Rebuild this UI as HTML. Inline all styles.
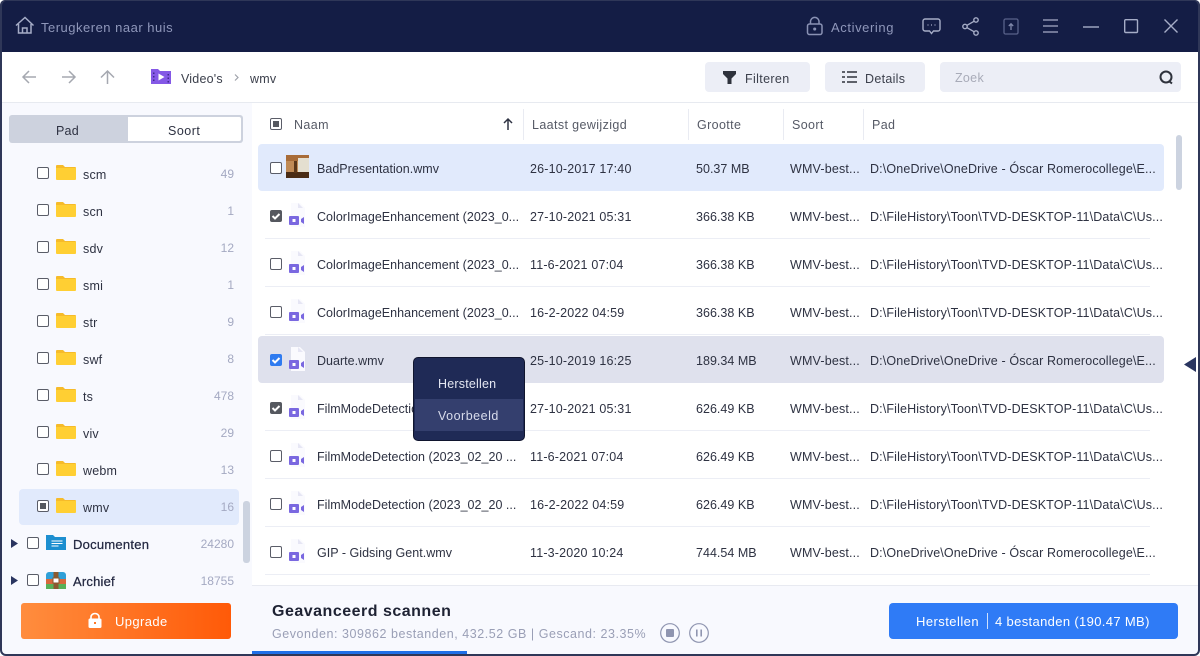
<!DOCTYPE html>
<html lang="nl"><head><meta charset="utf-8"><title>Herstellen</title>
<style>
*{box-sizing:border-box}
html,body{margin:0;padding:0;width:1200px;height:656px;overflow:hidden;background:#fff}
body{font-family:"Liberation Sans","Noto Sans CJK SC",sans-serif;font-size:12.5px;color:#2e3242;position:relative}
.a{position:absolute;white-space:nowrap}
.t{position:absolute;white-space:nowrap;line-height:18px;height:18px;margin-top:1px}
svg{position:absolute;display:block;overflow:visible}
.cb{position:absolute;width:12px;height:12px;border:1.3px solid #5a5d68;border-radius:2px;background:#fff}
.ck{position:absolute;width:12px;height:12px;border-radius:2px;background:#55585f}
.rows .cb,.rows .ck{margin-top:1px}
.hl{position:absolute;left:258px;width:906px;height:47px;border-radius:4px}
.sep{position:absolute;left:265px;width:885px;height:1px;background:#eceef5}
.hd{color:#565a66;font-size:12.5px;letter-spacing:.38px}
.cnt{position:absolute;right:966px;color:#a4a9c2;font-size:12px;line-height:18px;white-space:nowrap}
.sn{position:absolute;left:83px;line-height:18px;font-size:12.5px;color:#2e3242;letter-spacing:.2px;margin-top:1px}
.vs{position:absolute;top:109px;width:1px;height:31px;background:#e9ebf2}
.n{left:317px;letter-spacing:.02px}.d{left:530px;letter-spacing:.18px}.s{left:696px;letter-spacing:.02px}.k{left:790px;letter-spacing:.17px}.p{left:870px;letter-spacing:.14px}
</style></head><body>
<div class="a" style="left:0;top:0;width:1200px;height:52px;background:#141d45;border-radius:5px 5px 0 0"></div>

<svg style="left:15px;top:16px" width="20" height="20" viewBox="0 0 20 20" fill="none" stroke="#a6adc7" stroke-width="1.5"><path d="M1 9.500L10 1.500l8.500 8M3.500 8v9h12.500V8M7.500 17v-5h4.500v5"/></svg>
<div class="t" style="left:41px;top:18px;color:#8f97ba;font-size:13px;letter-spacing:.5px">Terugkeren naar huis</div>
<svg style="left:806px;top:16px" width="18" height="20" viewBox="0 0 18 20" fill="none" stroke="#8a92b4" stroke-width="1.500"><rect x="1.500" y="8" width="14.500" height="10.500" rx="2"/><path d="M4.500 8V5a4.300 4.300 0 0 1 8.500 0v3"/><circle cx="8.700" cy="13" r=".8" fill="#8a92b4"/></svg>
<div class="t" style="left:831px;top:18px;color:#8f97ba;font-size:13px;letter-spacing:.6px">Activering</div>
<svg style="left:922px;top:18px" width="19" height="17" viewBox="0 0 19 17" fill="none" stroke="#a6adc7" stroke-width="1.400"><path d="M3 1h13a2 2 0 0 1 2 2v8a2 2 0 0 1-2 2h-4.500L9.500 15.500 7.500 13H3a2 2 0 0 1-2-2V3a2 2 0 0 1 2-2z"/><path d="M5.500 7h1M9 7h1M12.500 7h1" stroke-width="1.300"/></svg>
<svg style="left:962px;top:17px" width="18" height="19" viewBox="0 0 18 19" fill="none" stroke="#a6adc7" stroke-width="1.400"><circle cx="3" cy="9.500" r="2.200"/><circle cx="14" cy="3" r="2.200"/><circle cx="14" cy="16" r="2.200"/><path d="M5 8.300l7-4M5 10.700l7 4"/></svg>
<svg style="left:1003px;top:18px" width="16" height="17" viewBox="0 0 16 17" fill="none" stroke="#59628a" stroke-width="1.300"><rect x="1" y="1" width="14" height="15" rx="1.500"/><path d="M8 12V6M5.800 8L8 5.800 10.200 8" stroke="#8089ab"/></svg>
<svg style="left:1043px;top:19px" width="16" height="14" viewBox="0 0 16 14" stroke="#a6adc7" stroke-width="1.300"><path d="M0 1h15M0 7h15M0 13h15"/></svg>
<svg style="left:1083px;top:26px" width="16" height="2"><path d="M0 1h16" stroke="#a6adc7" stroke-width="1.400"/></svg>
<svg style="left:1124px;top:19px" width="14" height="14" fill="none"><rect x=".7" y=".7" width="12.800" height="12.800" rx="1" stroke="#a6adc7" stroke-width="1.400"/></svg>
<svg style="left:1164px;top:19px" width="14" height="14" stroke="#a6adc7" stroke-width="1.400"><path d="M.5.500l13 13M13.500.500l-13 13"/></svg>

<svg style="left:22px;top:70px" width="15" height="14" fill="none" stroke="#a5a8b0" stroke-width="1.500"><path d="M14 7H1M7 1L1 7l6 6"/></svg>
<svg style="left:61px;top:70px" width="15" height="14" fill="none" stroke="#a5a8b0" stroke-width="1.500"><path d="M1 7h13M8 1l6 6-6 6"/></svg>
<svg style="left:100px;top:70px" width="15" height="14" fill="none" stroke="#a5a8b0" stroke-width="1.500"><path d="M7.500 14V1M1 7.500L7.500 1 14 7.500"/></svg>
<svg style="left:151px;top:69px" width="20" height="15" viewBox="0 0 20 15"><path d="M0 0h7l2 2h11v13H0z" fill="#8458e6"/><path d="M7.500 4.500l6 3.500-6 3.500z" fill="#fff"/><path d="M2 3.500h1.500v1.500H2zM2 7h1.500v1.500H2zM2 10.500h1.500V12H2zM16.500 5H18v1.500h-1.500zM16.500 8.500H18V10h-1.500zM16.500 12H18v1.500h-1.500z" fill="#3f2a8c"/></svg>
<div class="t" style="left:181px;top:69px;color:#3c404c;letter-spacing:.2px">Video's</div>
<svg style="left:234px;top:74px" width="5" height="7" fill="none" stroke="#9fa2aa" stroke-width="1.200"><path d="M1 .5l3 3-3 3"/></svg>
<div class="t" style="left:250px;top:69px;color:#3c404c;letter-spacing:.2px">wmv</div>

<div class="a" style="left:705px;top:62px;width:105px;height:30px;background:#eceef6;border-radius:4px"></div>
<svg style="left:723px;top:71px" width="13" height="13"><path d="M0 0h13v3L8.500 7.500V13h-4V7.500L0 3z" fill="#2e323c"/></svg>
<div class="t" style="left:745px;top:69px;color:#3c404c;font-size:12.500px;letter-spacing:.36px">Filteren</div>
<div class="a" style="left:825px;top:62px;width:100px;height:30px;background:#eceef6;border-radius:4px"></div>
<svg style="left:842px;top:71px" width="15" height="12" stroke="#2e323c" stroke-width="1.500"><path d="M0 1h3M5 1h10M0 6h3M5 6h10M0 11h3M5 11h10"/></svg>
<div class="t" style="left:865px;top:69px;color:#3c404c;letter-spacing:.3px">Details</div>
<div class="a" style="left:940px;top:62px;width:241px;height:30px;background:#eceef6;border-radius:4px"></div>
<div class="t" style="left:955px;top:68px;color:#a8abb8;letter-spacing:.3px">Zoek</div>
<svg style="left:1159px;top:71px" width="15" height="14" fill="none" stroke="#2e323c" stroke-width="2"><circle cx="7" cy="6" r="5.500"/><path d="M10.500 10.500l2.500 2"/></svg>
<div class="a" style="left:2px;top:102px;width:1196px;height:1px;background:#e7eaf0"></div>

<!-- sidebar -->
<div class="a" style="left:2px;top:103px;width:250px;height:551px;background:#f8f9fe"></div>
<div class="a" style="left:9px;top:115px;width:234px;height:28px;background:#cdd2de;border-radius:3px"></div>
<div class="a" style="left:128px;top:117px;width:113px;height:24px;background:#fff;border-radius:0 2px 2px 0"></div>
<div class="t" style="left:56px;top:121px;color:#2e3242;letter-spacing:.2px">Pad</div>
<div class="t" style="left:168px;top:121px;color:#2e3242;letter-spacing:.5px">Soort</div>
<div class="a" style="left:19px;top:489px;width:220px;height:36px;background:#e1eafc;border-radius:4px"></div>
<div class="a" style="left:243px;top:501px;width:7px;height:62px;background:#ccd3e0;border-radius:3px"></div>

<svg width="0" height="0" style="position:absolute"><defs>
<symbol id="fo" viewBox="0 0 20 15"><path d="M0 1a1 1 0 0 1 1-1h6l2 2h10a1 1 0 0 1 1 1v2H0z" fill="#f6bb2a"/><path d="M0 3h20v11a1 1 0 0 1-1 1H1a1 1 0 0 1-1-1z" fill="#ffcf33"/></symbol>
<symbol id="vf" viewBox="0 0 18 26"><path d="M3 0h9l5 5v19H3z" fill="#fafafe"/><path d="M10 0l5 5h-5z" fill="#e6e6f4"/><rect x="1" y="13" width="10" height="9" rx="1" fill="#7a68e0"/><path d="M13 16l3-2v7l-3-2z" fill="#7a68e0"/><rect x="4.500" y="16" width="3" height="3" fill="#fff"/></symbol>
<symbol id="tick" viewBox="0 0 12 12"><path d="M2.500 6l2.500 2.500 4.500-4.500" fill="none" stroke="#fff" stroke-width="2"/></symbol>
</defs></svg>

<div class="cb" style="left:37px;top:167px"></div><svg style="left:56px;top:165px" width="20" height="15"><use href="#fo"/></svg><div class="sn" style="top:165px">scm</div><div class="cnt" style="top:165px">49</div>
<div class="cb" style="left:37px;top:204px"></div><svg style="left:56px;top:202px" width="20" height="15"><use href="#fo"/></svg><div class="sn" style="top:202px">scn</div><div class="cnt" style="top:202px">1</div>
<div class="cb" style="left:37px;top:241px"></div><svg style="left:56px;top:239px" width="20" height="15"><use href="#fo"/></svg><div class="sn" style="top:239px">sdv</div><div class="cnt" style="top:239px">12</div>
<div class="cb" style="left:37px;top:278px"></div><svg style="left:56px;top:276px" width="20" height="15"><use href="#fo"/></svg><div class="sn" style="top:276px">smi</div><div class="cnt" style="top:276px">1</div>
<div class="cb" style="left:37px;top:315px"></div><svg style="left:56px;top:313px" width="20" height="15"><use href="#fo"/></svg><div class="sn" style="top:313px">str</div><div class="cnt" style="top:313px">9</div>
<div class="cb" style="left:37px;top:352px"></div><svg style="left:56px;top:350px" width="20" height="15"><use href="#fo"/></svg><div class="sn" style="top:350px">swf</div><div class="cnt" style="top:350px">8</div>
<div class="cb" style="left:37px;top:389px"></div><svg style="left:56px;top:387px" width="20" height="15"><use href="#fo"/></svg><div class="sn" style="top:387px">ts</div><div class="cnt" style="top:387px">478</div>
<div class="cb" style="left:37px;top:426px"></div><svg style="left:56px;top:424px" width="20" height="15"><use href="#fo"/></svg><div class="sn" style="top:424px">viv</div><div class="cnt" style="top:424px">29</div>
<div class="cb" style="left:37px;top:463px"></div><svg style="left:56px;top:461px" width="20" height="15"><use href="#fo"/></svg><div class="sn" style="top:461px">webm</div><div class="cnt" style="top:461px">13</div>
<div class="cb" style="left:37px;top:500px;background:#fff"><div class="a" style="left:2px;top:2px;width:6px;height:6px;background:#55585f"></div></div><svg style="left:56px;top:498px" width="20" height="15"><use href="#fo"/></svg><div class="sn" style="top:498px">wmv</div><div class="cnt" style="top:498px">16</div>

<svg style="left:11px;top:539px" width="7" height="9"><path d="M0 0l7 4.500-7 4.500z" fill="#2a3560"/></svg>
<div class="cb" style="left:27px;top:537px"></div>
<svg style="left:46px;top:535px" width="20" height="15"><path d="M0 0h7l2 2h11v13H0z" fill="#1d8fd0"/><path d="M5.500 6h11M5.500 8.500h11M5.500 11h7" stroke="#fff" stroke-width="1.100"/></svg>
<div class="sn" style="left:73px;top:535px;color:#242942;font-size:13px;letter-spacing:.25px;-webkit-text-stroke:.25px #242942">Documenten</div><div class="cnt" style="top:535px">24280</div>
<svg style="left:11px;top:576px" width="7" height="9"><path d="M0 0l7 4.500-7 4.500z" fill="#2a3560"/></svg>
<div class="cb" style="left:27px;top:574px"></div>
<svg style="left:46px;top:572px" width="20" height="17"><path d="M3 0h14a3 3 0 0 1 3 3v4H0V3a3 3 0 0 1 3-3z" fill="#2fa0d8"/><rect y="7" width="20" height="5" fill="#d8683c"/><rect y="12" width="20" height="5" fill="#58b058"/><rect x="7.500" width="5" height="17" fill="#8a5a30"/><rect x="7" y="6" width="6" height="5" fill="#fff" stroke="#8a5a30"/></svg>
<div class="sn" style="left:73px;top:572px;color:#242942;font-size:13px;letter-spacing:.2px;-webkit-text-stroke:.25px #242942">Archief</div><div class="cnt" style="top:572px">18755</div>

<div class="a" style="left:21px;top:603px;width:210px;height:36px;border-radius:3px;background:linear-gradient(90deg,#ff8d3e,#ff5a08)"></div>
<svg style="left:88px;top:613px" width="14" height="15" fill="none"><rect x=".5" y="5.500" width="13" height="9.500" rx="1.500" fill="#fff"/><path d="M3 6.500V4a4 3.500 0 0 1 8 0v2.500" stroke="#fff" stroke-width="1.600"/><rect x="6" y="9" width="2" height="2" fill="#ff7a28"/></svg>
<div class="t" style="left:115px;top:612px;color:#fff;font-size:13px;letter-spacing:.4px">Upgrade</div>

<!-- rows -->
<div class="rows">
<div class="cb" style="left:270px;top:117px"><div class="a" style="left:2px;top:2px;width:6px;height:6px;background:#55585f"></div></div>
<div class="t hd" style="left:294px;top:115px">Naam</div>
<svg style="left:503px;top:118px" width="10" height="12" fill="none" stroke="#2e3242" stroke-width="1.500"><path d="M5 12V1M1 5l4-4 4 4"/></svg>
<div class="vs" style="left:523px"></div><div class="t hd" style="left:532px;top:115px">Laatst gewijzigd</div>
<div class="vs" style="left:688px"></div><div class="t hd" style="left:697px;top:115px">Grootte</div>
<div class="vs" style="left:783px"></div><div class="t hd" style="left:792px;top:115px">Soort</div>
<div class="vs" style="left:863px"></div><div class="t hd" style="left:872px;top:115px">Pad</div>

<div class="hl" style="top:144px;background:#e1eafc"></div>
<div class="hl" style="top:336px;background:#dfe1ed"></div>
<div class="sep" style="top:238px"></div><div class="sep" style="top:286px"></div><div class="sep" style="top:334px"></div><div class="sep" style="top:430px"></div><div class="sep" style="top:478px"></div><div class="sep" style="top:526px"></div><div class="sep" style="top:574px"></div>
<div class="a" style="left:1176px;top:135px;width:6px;height:55px;background:#ccd3e0;border-radius:3px"></div>

<div class="cb" style="left:270px;top:161px"></div>
<svg style="left:286px;top:155px" width="23" height="23" viewBox="0 0 23 23"><rect width="23" height="23" fill="#c08a55"/><rect width="23" height="6" fill="#a86c38"/><rect x="12" y="3" width="11" height="14" fill="#e4dfd0"/><rect y="17" width="23" height="6" fill="#4a2c15"/><rect x="8" y="6" width="3" height="12" fill="#5a3618"/></svg>
<div class="t n" style="top:159px">BadPresentation.wmv</div><div class="t d" style="top:159px">26-10-2017 17:40</div><div class="t s" style="top:159px">50.37 MB</div><div class="t k" style="top:159px">WMV-best...</div><div class="t p" style="top:159px">D:\OneDrive\OneDrive - Óscar Romerocollege\E...</div>

<div class="ck" style="left:270px;top:209px"><svg style="left:0;top:0" width="12" height="12"><use href="#tick"/></svg></div>
<svg style="left:288px;top:203px" width="18" height="26"><use href="#vf"/></svg>
<div class="t n" style="top:207px">ColorImageEnhancement (2023_0...</div><div class="t d" style="top:207px">27-10-2021 05:31</div><div class="t s" style="top:207px">366.38 KB</div><div class="t k" style="top:207px">WMV-best...</div><div class="t p" style="top:207px">D:\FileHistory\Toon\TVD-DESKTOP-11\Data\C\Us...</div>

<div class="cb" style="left:270px;top:257px"></div>
<svg style="left:288px;top:251px" width="18" height="26"><use href="#vf"/></svg>
<div class="t n" style="top:255px">ColorImageEnhancement (2023_0...</div><div class="t d" style="top:255px">11-6-2021 07:04</div><div class="t s" style="top:255px">366.38 KB</div><div class="t k" style="top:255px">WMV-best...</div><div class="t p" style="top:255px">D:\FileHistory\Toon\TVD-DESKTOP-11\Data\C\Us...</div>

<div class="cb" style="left:270px;top:305px"></div>
<svg style="left:288px;top:299px" width="18" height="26"><use href="#vf"/></svg>
<div class="t n" style="top:303px">ColorImageEnhancement (2023_0...</div><div class="t d" style="top:303px">16-2-2022 04:59</div><div class="t s" style="top:303px">366.38 KB</div><div class="t k" style="top:303px">WMV-best...</div><div class="t p" style="top:303px">D:\FileHistory\Toon\TVD-DESKTOP-11\Data\C\Us...</div>

<div class="ck" style="left:270px;top:353px;background:#2f7bf0"><svg style="left:0;top:0" width="12" height="12"><use href="#tick"/></svg></div>
<svg style="left:288px;top:347px" width="18" height="26"><use href="#vf"/></svg>
<div class="t n" style="top:351px">Duarte.wmv</div><div class="t d" style="top:351px">25-10-2019 16:25</div><div class="t s" style="top:351px">189.34 MB</div><div class="t k" style="top:351px">WMV-best...</div><div class="t p" style="top:351px">D:\OneDrive\OneDrive - Óscar Romerocollege\E...</div>

<div class="ck" style="left:270px;top:401px"><svg style="left:0;top:0" width="12" height="12"><use href="#tick"/></svg></div>
<svg style="left:288px;top:395px" width="18" height="26"><use href="#vf"/></svg>
<div class="t n" style="top:399px">FilmModeDetection</div><div class="t d" style="top:399px">27-10-2021 05:31</div><div class="t s" style="top:399px">626.49 KB</div><div class="t k" style="top:399px">WMV-best...</div><div class="t p" style="top:399px">D:\FileHistory\Toon\TVD-DESKTOP-11\Data\C\Us...</div>

<div class="cb" style="left:270px;top:449px"></div>
<svg style="left:288px;top:443px" width="18" height="26"><use href="#vf"/></svg>
<div class="t n" style="top:447px">FilmModeDetection (2023_02_20 ...</div><div class="t d" style="top:447px">11-6-2021 07:04</div><div class="t s" style="top:447px">626.49 KB</div><div class="t k" style="top:447px">WMV-best...</div><div class="t p" style="top:447px">D:\FileHistory\Toon\TVD-DESKTOP-11\Data\C\Us...</div>

<div class="cb" style="left:270px;top:497px"></div>
<svg style="left:288px;top:491px" width="18" height="26"><use href="#vf"/></svg>
<div class="t n" style="top:495px">FilmModeDetection (2023_02_20 ...</div><div class="t d" style="top:495px">16-2-2022 04:59</div><div class="t s" style="top:495px">626.49 KB</div><div class="t k" style="top:495px">WMV-best...</div><div class="t p" style="top:495px">D:\FileHistory\Toon\TVD-DESKTOP-11\Data\C\Us...</div>

<div class="cb" style="left:270px;top:545px"></div>
<svg style="left:288px;top:539px" width="18" height="26"><use href="#vf"/></svg>
<div class="t n" style="top:543px">GIP - Gidsing Gent.wmv</div><div class="t d" style="top:543px">11-3-2020 10:24</div><div class="t s" style="top:543px">744.54 MB</div><div class="t k" style="top:543px">WMV-best...</div><div class="t p" style="top:543px">D:\OneDrive\OneDrive - Óscar Romerocollege\E...</div>
</div>

<svg style="left:1184px;top:357px" width="12" height="15"><path d="M0 7.500L12 0v15z" fill="#2a3560"/></svg>

<!-- context menu -->
<div class="a" style="left:413px;top:357px;width:112px;height:84px;background:#1f2a56;border:1px solid #10152e;border-radius:5px"></div>
<div class="a" style="left:415px;top:399px;width:108px;height:32px;background:#343f6e"></div>
<div class="t" style="left:438px;top:374px;color:#e4e7f2;letter-spacing:.2px">Herstellen</div>
<div class="t" style="left:438px;top:406px;color:#d8dcec;letter-spacing:.5px">Voorbeeld</div>

<!-- bottom -->
<div class="a" style="left:252px;top:585px;width:946px;height:69px;background:#f8f9fe;border-top:1px solid #e8eaf1"></div>
<div class="a" style="left:252px;top:651px;width:215px;height:3px;background:#1f6fe8"></div>
<div class="t" style="left:272px;top:602px;color:#1e2233;font-size:16px;font-weight:bold;letter-spacing:.5px">Geavanceerd scannen</div>
<div class="t" style="left:272px;top:624px;color:#9a9fb6;font-size:12.500px;letter-spacing:.54px">Gevonden: 309862 bestanden, 432.52 GB | Gescand: 23.35%</div>
<svg style="left:660px;top:623px" width="20" height="20" fill="none"><circle cx="10" cy="10" r="9.300" stroke="#8f95b0" stroke-width="1.200"/><rect x="6" y="6" width="8" height="8" rx="1" fill="#8f95b0"/></svg>
<svg style="left:689px;top:623px" width="20" height="20" fill="none" stroke="#8f95b0"><circle cx="10" cy="10" r="9.300" stroke-width="1.200"/><path d="M7.800 6.500v7M12.200 6.500v7" stroke-width="1.600"/></svg>
<div class="a" style="left:889px;top:603px;width:289px;height:36px;background:#2f7bf6;border-radius:4px"></div>
<div class="t" style="left:916px;top:612px;color:#fff;font-size:13px;letter-spacing:.45px">Herstellen</div>
<div class="a" style="left:987px;top:613px;width:1px;height:16px;background:#cfe0fd"></div>
<div class="t" style="left:995px;top:612px;color:#fff;font-size:13px;letter-spacing:.35px">4 bestanden (190.47 MB)</div>

<div class="a" style="left:0;top:0;width:1200px;height:656px;border:2px solid #2f3758;border-top:1px solid #2f3758;border-radius:6px"></div>
</body></html>
